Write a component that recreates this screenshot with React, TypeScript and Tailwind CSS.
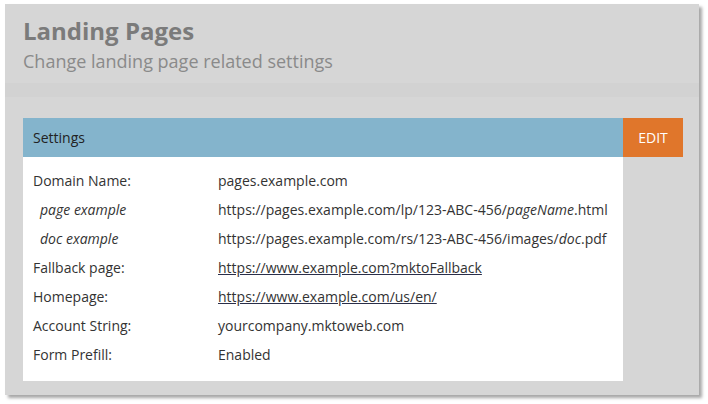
import React from "react";

const rows: { label: React.ReactNode; value: React.ReactNode; italic?: boolean }[] = [
  { label: "Domain Name:", value: "pages.example.com" },
  {
    label: "page example",
    italic: true,
    value: (
      <>
        https://pages.example.com/lp/123-ABC-456/<i>pageName</i>.html
      </>
    ),
  },
  {
    label: "doc example",
    italic: true,
    value: (
      <>
        https://pages.example.com/rs/123-ABC-456/images/<i>doc</i>.pdf
      </>
    ),
  },
  {
    label: "Fallback page:",
    value: <span className="underline decoration-[#2a2f4a]">https://www.example.com?mktoFallback</span>,
  },
  {
    label: "Homepage:",
    value: <span className="underline decoration-[#2a2f4a]">https://www.example.com/us/en/</span>,
  },
  { label: "Account String:", value: "yourcompany.mktoweb.com" },
  { label: "Form Prefill:", value: "Enabled" },
];

export default function App() {
  return (
    <div
      className="w-[708px] h-[404px] bg-white pt-[4px] pl-[5px]"
      style={{ fontFamily: '"Open Sans", "Noto Sans", sans-serif' }}
    >
      <div className="w-[694px] h-[391px] bg-[#d6d6d6] shadow-[3px_3px_3px_rgba(0,0,0,0.35)] flex flex-col">
        <div className="h-[79px] pl-[18px] pt-[11px]">
          <div className="text-[24px] font-bold leading-[32px] text-[#7b7b7b]">Landing Pages</div>
          <div className="text-[18px] leading-[26px] text-[#8a8a8a] mt-[1px]">Change landing page related settings</div>
        </div>
        <div className="h-[14px] bg-[#d2d2d2]" />
        <div className="pl-[18px] pt-[21px] flex">
          <div className="w-[600px] flex flex-col">
            <div className="h-[39px] bg-[#84b4cc] flex items-center pl-[10px] text-[14px] text-[#222]">Settings</div>
            <div className="bg-white h-[224px] pt-[14px] text-[14px] text-[#333]">
              {rows.map((r, i) => (
                <div key={i} className="flex h-[29px] items-start leading-[20px]">
                  <div className={r.italic ? "w-[195px] pl-[17px] italic" : "w-[195px] pl-[10px]"}>{r.label}</div>
                  <div className="whitespace-nowrap">{r.value}</div>
                </div>
              ))}
            </div>
          </div>
          <div className="w-[60px] h-[39px] bg-[#e0762b] text-white text-[14px] flex items-center justify-center">EDIT</div>
        </div>
      </div>
    </div>
  );
}
